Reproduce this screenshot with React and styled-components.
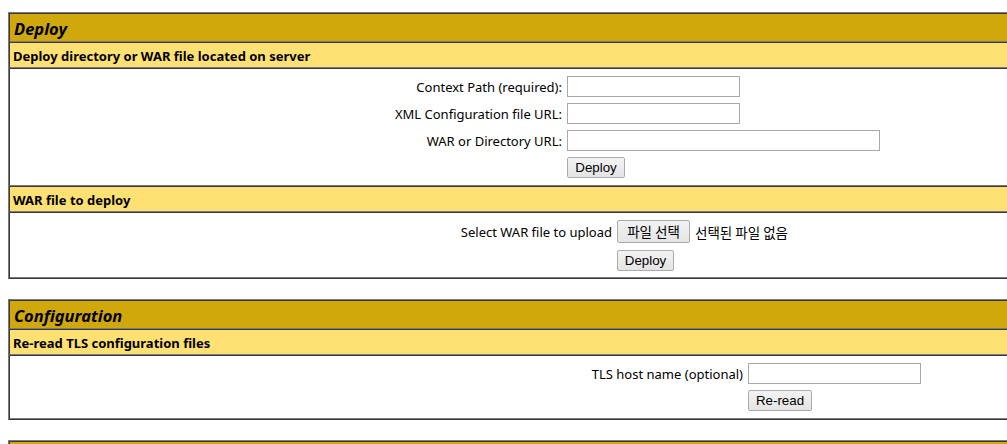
import React from "react";
import styled, { createGlobalStyle } from "styled-components";

const LIGHT = "#7a7a7a";
const DARK = "#3a3a3a";

const Global = createGlobalStyle`
  html, body { margin: 0; overflow: hidden; background: #fff; }
  body {
    padding: 12px 0 0 8px;
    font-family: "Noto Sans", "Open Sans", sans-serif;
    font-size: 13px;
    color: #000;
  }
`;

const Page = styled.main`
  display: flex;
  flex-direction: column;
  align-items: flex-start;
  gap: 20px;
`;

const Panel = styled.section`
  width: 1150px;
  box-sizing: border-box;
  border: 1px solid;
  border-color: ${LIGHT} ${DARK} ${DARK} ${LIGHT};
  display: flex;
  flex-direction: column;
`;

const Cell = styled.div`
  border: 1px solid;
  border-color: ${DARK} ${LIGHT} ${LIGHT} ${DARK};
`;

const TitleCell = styled(Cell)`
  background: #d1a80c;
  padding: 4px 3px 2px 4px;
  min-height: 21px;
  font-style: italic;
  font-weight: 700;
  font-size: 16.5px;
  line-height: 21px;
`;

const HeaderCell = styled(Cell)`
  background: #ffe073;
  padding: 4px 3px 2px;
  font-weight: 700;
  font-size: 13px;
  line-height: 18px;
`;

const BodyCell = styled(Cell)`
  background: #fff;
  padding: ${(p) => p.$pad || "4px 0"};
  display: flex;
  flex-direction: column;
`;

const FormRow = styled.div`
  display: grid;
  grid-template-columns: ${(p) => p.$label}px auto;
  column-gap: 5px;
  align-items: center;
  padding: ${(p) => p.$pad || "3px 0"};
`;

const Label = styled.span`
  text-align: right;
  line-height: 18px;
  white-space: nowrap;
  padding-top: 1px;
`;

const Field = styled.div`
  display: flex;
  align-items: center;
  gap: 5px;
`;

const TextInput = styled.input`
  width: ${(p) => p.$w}px;
  height: 21px;
  box-sizing: border-box;
  margin: 0;
  padding: 1px 2px;
  border: 1px solid #a9a9a9;
  background: #fff;
  font: inherit;
`;

const Button = styled.button`
  width: ${(p) => p.$w}px;
  height: ${(p) => p.$h || 21}px;
  box-sizing: border-box;
  margin: 0;
  padding: 0;
  border: 1px solid #acacac;
  border-radius: 2px;
  background: linear-gradient(#f3f3f3, #e4e4e4);
  color: #000;
  font-family: ${(p) =>
    p.$korean
      ? '"Noto Sans CJK KR", sans-serif'
      : '"Liberation Sans", Arial, sans-serif'};
  font-size: ${(p) => (p.$korean ? "13.5px" : "13.333px")};
  line-height: 1;
`;

const NoFile = styled.span`
  font-family: "Noto Sans CJK KR", sans-serif;
  font-size: 13.5px;
  line-height: 18px;
`;

export default function App() {
  return (
    <>
      <Global />
      <Page>
        <Panel>
          <TitleCell>Deploy</TitleCell>
          <HeaderCell>Deploy directory or WAR file located on server</HeaderCell>
          <BodyCell>
            <FormRow $label={552}>
              <Label>Context Path (required):</Label>
              <Field>
                <TextInput $w={173} />
              </Field>
            </FormRow>
            <FormRow $label={552}>
              <Label>XML Configuration file URL:</Label>
              <Field>
                <TextInput $w={173} />
              </Field>
            </FormRow>
            <FormRow $label={552}>
              <Label>WAR or Directory URL:</Label>
              <Field>
                <TextInput $w={313} />
              </Field>
            </FormRow>
            <FormRow $label={552}>
              <Label />
              <Field>
                <Button $w={58}>Deploy</Button>
              </Field>
            </FormRow>
          </BodyCell>
          <HeaderCell>WAR file to deploy</HeaderCell>
          <BodyCell $pad="4px 0 3px">
            <FormRow $label={602} $pad="3px 0 4px">
              <Label>Select WAR file to upload</Label>
              <Field>
                <Button $w={73} $h={23} $korean>
                  파일 선택
                </Button>
                <NoFile>선택된 파일 없음</NoFile>
              </Field>
            </FormRow>
            <FormRow $label={602}>
              <Label />
              <Field>
                <Button $w={57}>Deploy</Button>
              </Field>
            </FormRow>
          </BodyCell>
        </Panel>

        <Panel>
          <TitleCell>Configuration</TitleCell>
          <HeaderCell>Re-read TLS configuration files</HeaderCell>
          <BodyCell>
            <FormRow $label={733}>
              <Label>TLS host name (optional)</Label>
              <Field>
                <TextInput $w={173} />
              </Field>
            </FormRow>
            <FormRow $label={733}>
              <Label />
              <Field>
                <Button $w={64}>Re-read</Button>
              </Field>
            </FormRow>
          </BodyCell>
        </Panel>

        <Panel aria-hidden="true">
          <TitleCell />
        </Panel>
      </Page>
    </>
  );
}
